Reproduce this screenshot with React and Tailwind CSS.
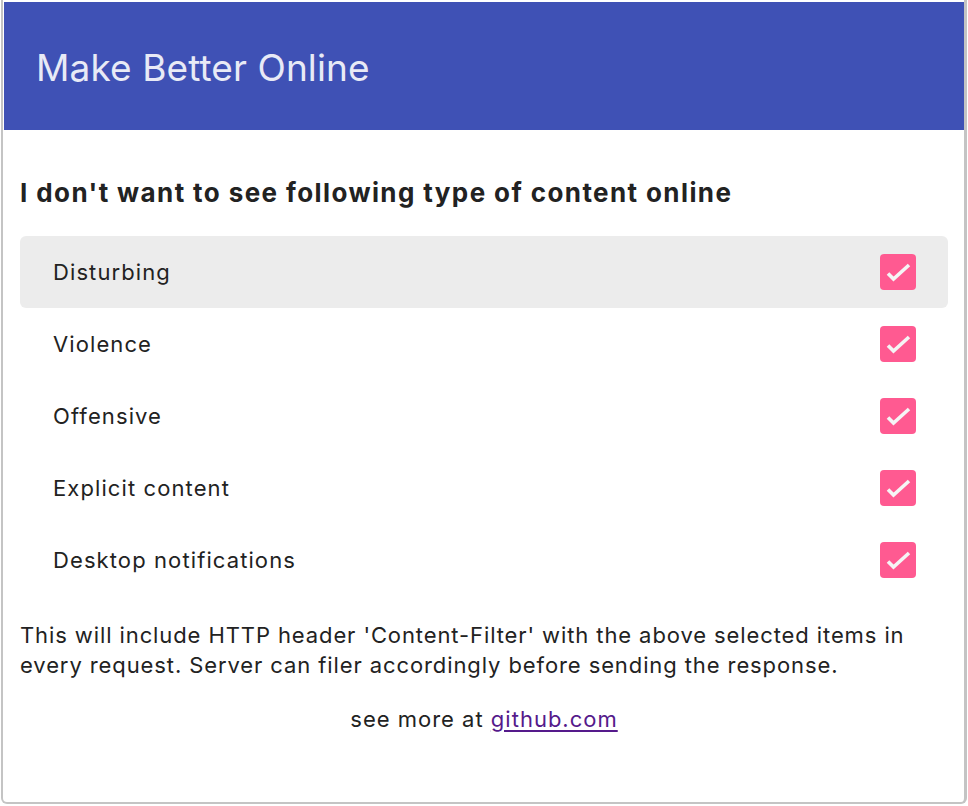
import React, { useState } from "react";

const items = [
  "Disturbing",
  "Violence",
  "Offensive",
  "Explicit content",
  "Desktop notifications",
];

const Check = ({ checked, onClick }) => (
  <button
    onClick={onClick}
    className={`w-9 h-9 rounded-[4px] block ${
      checked ? "bg-[#ff5a91]" : "border-2 border-gray-500 bg-white"
    }`}>
    {checked && (
      <svg width="36" height="36" viewBox="0 0 36 36">
        <path
          d="M8 19.5l5.5 5.5L29 11"
          fill="none"
          stroke="#f5f5f5"
          strokeWidth="3.6"
        />
      </svg>
    )}
  </button>
);

export default function App() {
  const [checked, setChecked] = useState(items.map(() => true));

  return (
    <div className="w-[968px] h-[806px] bg-white font-['Inter',sans-serif] text-[#222]">
      <div className="h-[804px] ml-px mr-px border-l-2 border-r-[3px] border-b-2 border-[#c4c4c4] rounded-b-[6px] pt-[2px] pl-px flex flex-col">
        <div className="h-[128px] bg-[#3f51b5] flex items-center pl-[32px] pt-[4px]">
          <h1 className="text-[#e8eaf6] text-[37px] tracking-[0.1px]">Make Better Online</h1>
        </div>
        <div className="px-[16px] pt-[46px]">
          <h2 className="font-bold text-[26px] leading-[34px] tracking-[1.4px] mb-[26px]">
            I don't want to see following type of content online
          </h2>
          <div className="flex flex-col">
            {items.map((item, i) => (
              <div
                key={item}
                className={`h-[72px] rounded-[6px] flex items-center justify-between pl-[33px] pr-[32px] ${
                  i === 0 ? "bg-[#ececec]" : ""
                }`}>
                <span className="text-[22px] tracking-[1.1px]">{item}</span>
                <Check
                  checked={checked[i]}
                  onClick={() =>
                    setChecked(checked.map((c, j) => (j === i ? !c : c)))
                  }
                />
              </div>
            ))}
          </div>
          <p className="mt-[24px] text-[22px] leading-[30px] tracking-[0.9px]">
            This will include HTTP header 'Content-Filter' with the above
            selected items in every request. Server can filer accordingly
            before sending the response.
          </p>
          <p className="mt-[24px] text-center text-[22px] leading-[30px] tracking-[1px]">
            see more at{" "}
            <a href="#" className="text-[#551a8b] underline underline-offset-[3px]">
              github.com
            </a>
          </p>
        </div>
      </div>
    </div>
  );
}
